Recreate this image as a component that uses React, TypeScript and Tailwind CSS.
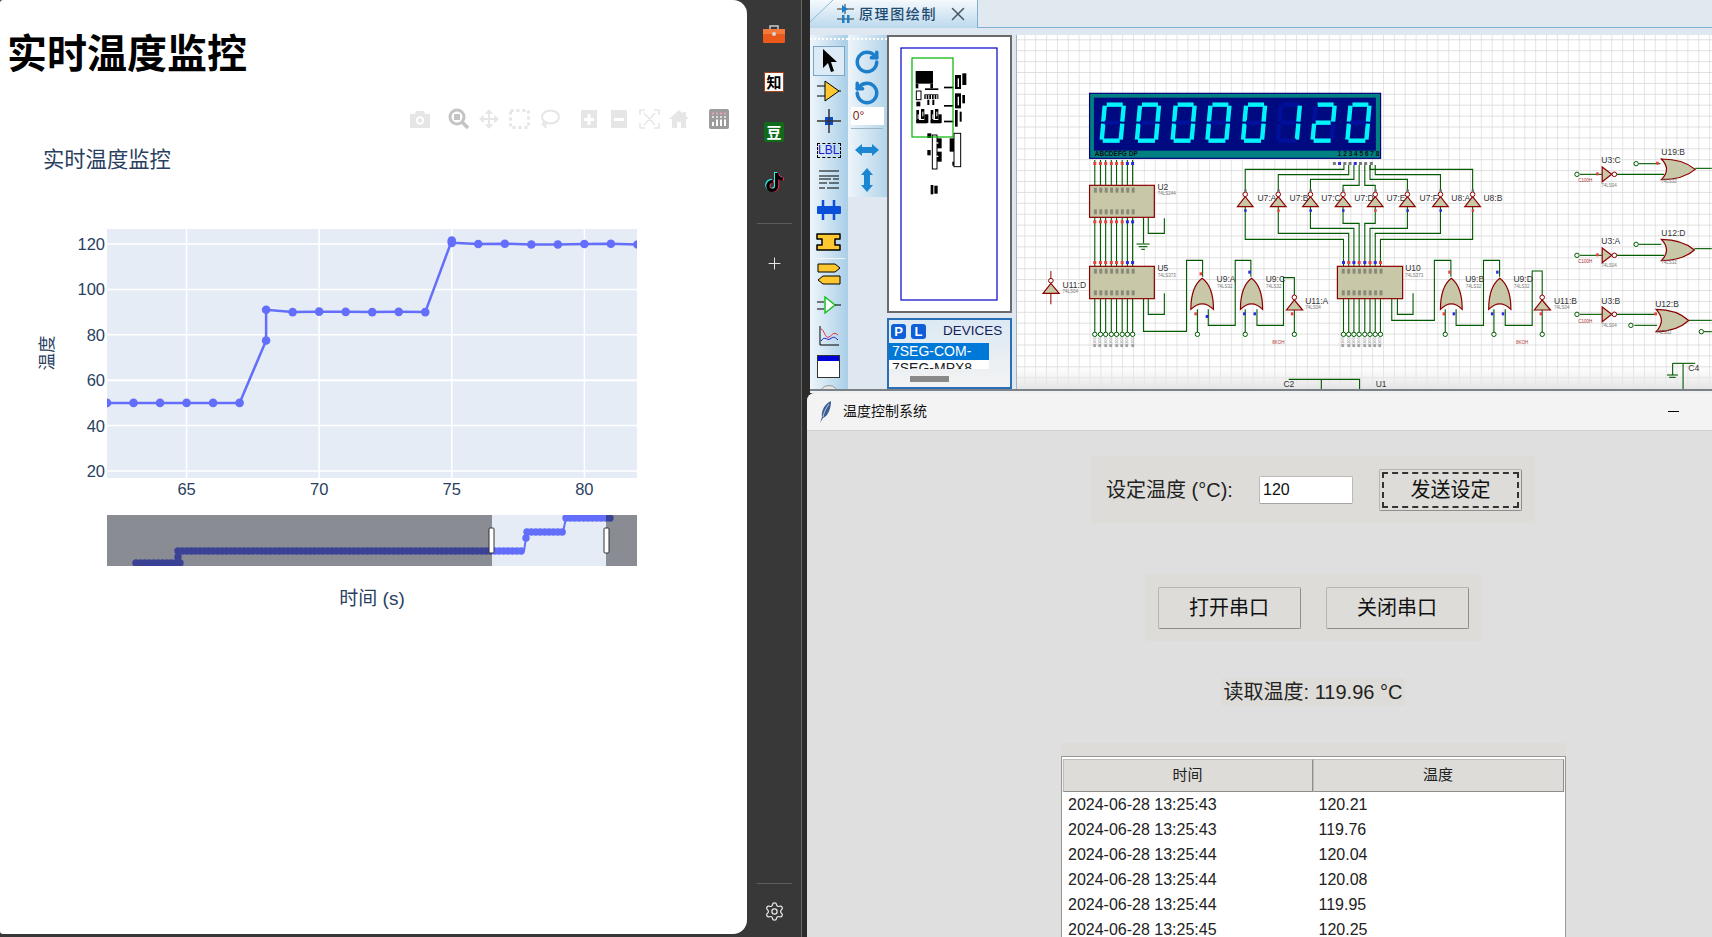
import React from 'react';
import { Move, Plus, RotateCcw, RotateCw, Settings, X as CloseIcon } from 'lucide-react';
import { FaTiktok } from 'react-icons/fa';

const cjk = { fontFamily: '"Liberation Sans","Noto Sans CJK SC",sans-serif' };

/* ---------- plotly chart ---------- */
const cx = (v: number) => 107 + (v - 62) * 26.52;
const cy = (v: number) => 244 + (120 - v) * 2.27;

const points: [number, number][] = [
  [62, 50], [63, 50], [64, 50], [65, 50], [66, 50], [67, 50], [68, 77.5], [68, 91], [69, 90], [70, 90.2], [71, 90.1],
  [72, 90], [73, 90.1], [74, 90], [75, 121.5], [75, 120.5], [76, 120], [77, 120.1], [78, 119.8], [79, 119.8], [80, 120], [81, 120.1], [82, 119.8],
];

// overview dots of the range slider, one per sample
const rangeDots: [number, number][] = [
  ...Array.from({ length: 11 }, (_, i): [number, number] => [136 + i * 4.4, 563]),
  [178, 557],
  ...Array.from({ length: 79 }, (_, i): [number, number] => [178 + i * 4.4, 551]),
  [526, 538],
  ...Array.from({ length: 9 }, (_, i): [number, number] => [527 + i * 4.4, 532]),
  ...Array.from({ length: 11 }, (_, i): [number, number] => [566 + i * 4.4, 518]),
];

const Chart = () => (
  <svg width={747} height={837} viewBox="0 100 747 837" className="block" style={cjk}>
    <defs>
      <clipPath id="plot"><rect x={107} y={229} width={530} height={249} /></clipPath>
      <clipPath id="range"><rect x={107} y={515} width={530} height={51} /></clipPath>
    </defs>
    <text x={43} y={167} fontSize={21.3} fill="#2a3f5f">实时温度监控</text>
    <rect x={107} y={229} width={530} height={249} fill="#e5ecf6" />
    {[65, 70, 75, 80].map(t => (
      <g key={t}>
        <line x1={cx(t)} x2={cx(t)} y1={229} y2={478} stroke="#fff" strokeWidth={1.5} />
        <text x={cx(t)} y={495} textAnchor="middle" fontSize={16.5} fill="#2a3f5f">{t}</text>
      </g>
    ))}
    {[20, 40, 60, 80, 100, 120].map(t => (
      <g key={t}>
        <line x1={107} x2={637} y1={cy(t)} y2={cy(t)} stroke="#fff" strokeWidth={t === 60 ? 2 : 1.5} />
        <text x={105} y={cy(t) + 6} textAnchor="end" fontSize={16.5} fill="#2a3f5f">{t}</text>
      </g>
    ))}
    <g clipPath="url(#plot)">
      <polyline points={points.map(p => `${cx(p[0])},${cy(p[1])}`).join(' ')} fill="none" stroke="#636efa" strokeWidth={2.5} />
      {points.map((p, i) => <circle key={i} cx={cx(p[0])} cy={cy(p[1])} r={4.3} fill="#636efa" />)}
    </g>
    <text transform="rotate(-90 47 353)" x={47} y={359} textAnchor="middle" fontSize={17.5} fill="#2a3f5f">温度</text>

    <rect x={107} y={515} width={530} height={51} fill="#e5ecf6" />
    <g clipPath="url(#range)">
      <polyline points="135,563 178,563 178,551 524,551 526,538 526,532 563,532 566,518 608,518" fill="none" stroke="#636efa" strokeWidth={2} />
      {rangeDots.map((p, i) => <circle key={i} cx={p[0]} cy={p[1]} r={3.7} fill="#636efa" />)}
    </g>
    <rect x={107} y={515} width={385} height={51} fill="#000" fillOpacity={0.4} />
    <rect x={606} y={515} width={31} height={51} fill="#000" fillOpacity={0.4} />
    <rect x={489} y={528} width={5} height={25} rx={1} fill="#fff" stroke="#333" />
    <rect x={604} y={528} width={5} height={25} rx={1} fill="#fff" stroke="#333" />
    <text x={372} y={605} textAnchor="middle" fontSize={19} fill="#2a3f5f">时间 (s)</text>
  </svg>
);

const Square = ({ kind }: { kind: 'plus' | 'minus' }) => (
  <svg width={18} height={20} viewBox="0 0 18 20">
    <rect x={1} y={1} width={16} height={18} fill="#e6e6e6" />
    <rect x={4} y={9} width={10} height={3} fill="#fff" />
    {kind === 'plus' && <rect x={7.5} y={5} width={3} height={11} fill="#fff" />}
  </svg>
);

const Modebar = () => (
  <div className="absolute left-[405px] top-[109px] flex h-5 items-center">
    <div className="flex w-[30px] justify-center">
      <svg width={20} height={17} viewBox="0 0 20 17">
        <path d="M0 3h5l1-3h8l1 3h5v14H0z" fill="#e6e6e6" />
        <circle cx={10} cy={9.5} r={4.2} fill="#fff" />
        <circle cx={10} cy={9.5} r={2.2} fill="#e6e6e6" />
      </svg>
    </div>
    <div className="ml-[9px] flex w-[30px] justify-center">
      <svg width={22} height={22} viewBox="0 0 22 22">
        <circle cx={9} cy={9} r={7} fill="#fff" stroke="#c4c4c4" strokeWidth={3} />
        <rect x={6} y={6} width={6} height={6} fill="#c4c4c4" />
        <line x1={14} y1={14} x2={20} y2={20} stroke="#c4c4c4" strokeWidth={3.5} />
      </svg>
    </div>
    <div className="flex w-[30px] justify-center"><Move size={20} color="#e6e6e6" strokeWidth={2.5} /></div>
    <div className="flex w-[30px] justify-center">
      <svg width={21} height={20}><rect x={1.5} y={1.5} width={18} height={17} fill="none" stroke="#e6e6e6" strokeWidth={3} strokeDasharray="3 3" /></svg>
    </div>
    <div className="flex w-[30px] justify-center">
      <svg width={21} height={20} fill="none" stroke="#e6e6e6" strokeWidth={2}>
        <ellipse cx={11.5} cy={8} rx={8.5} ry={6.5} />
        <path d="M5 13c-2 2-1 4 1 3s1-3-1-3zM6 16c0 1 0 2 1 3" />
      </svg>
    </div>
    <div className="ml-[10px] flex w-[30px] justify-center"><Square kind="plus" /></div>
    <div className="flex w-[30px] justify-center"><Square kind="minus" /></div>
    <div className="flex w-[30px] justify-center">
      <svg width={21} height={20} fill="none" stroke="#e6e6e6" strokeWidth={1.5}>
        <path d="M1 6V1h5M15 1h5v5M20 14v5h-5M6 19H1v-5M5 4l11 12M16 4L5 16" />
      </svg>
    </div>
    <div className="flex w-[30px] justify-center">
      <svg width={20} height={18} viewBox="0 0 20 18">
        <path d="M10 0L0 9h3v9h5v-6h4v6h5V9h3l-3-2.7V2h-3v1.6z" fill="#e6e6e6" />
      </svg>
    </div>
    <div className="ml-[10px] flex w-[30px] justify-center">
      <svg width={20} height={20}>
        <rect width={20} height={20} rx={2} fill="#9c9c9c" />
        {[4, 8, 12, 16].map(x => <g key={x}>
          <rect x={x - 1} y={3.5} width={2} height={2} fill="#e8a0b4" />
          <rect x={x - 1} y={7} width={2} height={2} fill="#ddd" />
          <rect x={x - 1} y={x === 4 ? 13 : 10.5} width={2} height={x === 4 ? 4 : 6.5} fill="#fff" />
        </g>)}
      </svg>
    </div>
  </div>
);

/* ---------- dark dock ---------- */
const Dock = () => (
  <div className="flex w-[55px] flex-col items-center border-r border-[#6a6a6a] bg-[#383838]" style={cjk}>
    <div className="mt-[24px] h-[19px]">
      <svg width={22} height={19} viewBox="0 0 22 19">
        <path d="M7 5V2h8v3" fill="none" stroke="#c9c9c9" strokeWidth={1.5} />
        <rect x={0} y={5} width={22} height={14} rx={1} fill="#e8591a" />
        <rect x={0} y={5} width={22} height={5} fill="#f47a3c" />
        <circle cx={11} cy={10} r={2} fill="#d8d8d8" />
      </svg>
    </div>
    <div className="mt-[29px] flex h-5 w-5 items-center justify-center border border-[#a0431f] bg-white text-[15px] font-bold leading-none text-black">知</div>
    <div className="mt-[30px] flex h-5 w-5 items-center justify-center rounded-[2px] bg-[#0f6b1a] text-[15px] font-bold leading-none text-white">豆</div>
    <div className="relative mt-[30px] h-5 w-5">
      <FaTiktok size={19} color="#25f4ee" className="absolute left-0 top-0" />
      <FaTiktok size={19} color="#fe2c55" className="absolute left-[2px] top-[1px]" />
      <FaTiktok size={19} color="#000" className="absolute left-[1px] top-[0.5px]" />
    </div>
    <div className="mt-[31px] h-px w-[35px] bg-[#5c5c5c]" />
    <Plus size={19} strokeWidth={1.2} color="#f0f0f0" className="mt-[30px]" />
    <div className="mt-auto h-px w-[35px] bg-[#5c5c5c]" />
    <Settings size={21} strokeWidth={1.4} color="#e8e8e8" className="mb-[15px] mt-[17px]" />
  </div>
);

/* ---------- proteus toolbars ---------- */
const Tool = ({ h, children, active }: { h: number; children: React.ReactNode; active?: boolean }) => (
  <div className={`flex w-[32px] shrink-0 items-center justify-center ${active ? 'border border-[#7aa7c7] bg-[#dcebf5]' : ''}`} style={{ height: h }}>
    {children}
  </div>
);

const ToolColumn = () => (
  <div className="flex h-[354px] w-[38px] flex-col items-center overflow-hidden bg-gradient-to-r from-[#eef5fa] to-[#a9cfe8] pt-[3px]">
    <div className="h-[8px] w-full shrink-0 border-t-2 border-dotted border-white" />
    <Tool h={30} active><svg width={16} height={26}><path d="M2 1v19l5-5 3 9 3-1-3-9h6z" fill="#000" /></svg></Tool>
    <Tool h={30}>
      <svg width={24} height={22}><path d="M8 1v20l14-10z" fill="#fdc82f" stroke="#000" /><path d="M0 6h8M0 16h8M22 11h2" stroke="#000" /></svg>
    </Tool>
    <Tool h={29}>
      <svg width={24} height={24}><rect x={8} y={8} width={8} height={8} fill="#0a4fd0" /><path d="M12 0v24M0 12h24" stroke="#333" strokeWidth={1.5} /></svg>
    </Tool>
    <Tool h={30}>
      <div className="flex h-[15px] w-6 items-center justify-center border border-dashed border-black font-['Liberation_Sans',sans-serif] text-[12px] leading-none text-[#1a1ad0]">LBL</div>
    </Tool>
    <Tool h={30}>
      <svg width={20} height={20} stroke="#000"><path d="M0 1h20M0 6h20M0 9h12M14 9h6M0 13h8M10 13h10M0 18h6M8 18h12" /></svg>
    </Tool>
    <Tool h={30}>
      <svg width={24} height={20}><rect x={0} y={6} width={24} height={8} rx={1} fill="#0a50d8" /><path d="M6 0v20M17 0v20" stroke="#0a50d8" strokeWidth={2.5} /></svg>
    </Tool>
    <Tool h={33}>
      <svg width={25} height={20}><path d="M1 2H24V7H19V13H24V18H1V13H6V7H1Z" fill="#fdc82f" stroke="#000" strokeWidth={1.5} strokeLinejoin="round" /></svg>
    </Tool>
    <div className="h-px w-[32px] shrink-0 bg-[#f4f4f4]" />
    <Tool h={30}>
      <svg width={24} height={22} stroke="#000"><path d="M1 1h17l5 4-5 4H1z" fill="#fdc82f" /><path d="M23 13H6l-5 4 5 4h17z" fill="#fdc82f" /></svg>
    </Tool>
    <Tool h={32}>
      <svg width={24} height={18}><path d="M8 1v16l10-8z" fill="#fff" stroke="#19c21f" strokeWidth={1.5} /><path d="M0 6h7M0 13h7M18 9h6" stroke="#000" /></svg>
    </Tool>
    <Tool h={30}>
      <svg width={22} height={22} fill="none"><path d="M2 1v19h19" stroke="#000" /><path d="M3 4c3 0 4 10 8 8s4-6 9-2" stroke="#e03030" /><path d="M3 16c4-6 6 0 9-2s4-3 8 1" stroke="#1a1ad0" /></svg>
    </Tool>
    <Tool h={31}>
      <svg width={23} height={23}><rect x={0.5} y={0.5} width={22} height={22} fill="#fff" stroke="#333" /><rect x={1} y={1} width={21} height={5} fill="#0000d8" /></svg>
    </Tool>
    <div className="mt-[3px] h-5 w-5 shrink-0 rounded-full border border-[#999] bg-[#e8e8e8]" />
  </div>
);

const DoubleArrow = ({ vertical }: { vertical?: boolean }) => (
  <svg width={24} height={24} viewBox="0 0 24 24" className={vertical ? 'rotate-90' : ''}>
    <path d="M0 12l7-6v3h10V6l7 6-7 6v-3H7v3z" fill="#1b86d1" />
  </svg>
);

const RotateColumn = () => (
  <div className="flex h-[162px] w-[40px] flex-col items-center bg-gradient-to-r from-[#eef5fa] to-[#b3d4ea] pt-[3px]">
    <div className="h-[8px] w-full shrink-0 border-t-2 border-dotted border-white" />
    <RotateCw size={26} strokeWidth={3.2} color="#1b7fcb" className="mt-[3px] shrink-0" />
    <RotateCcw size={26} strokeWidth={3.2} color="#1b7fcb" className="mt-[5px] shrink-0" />
    <div className="mt-[1px] h-[18px] w-[33px] shrink-0 bg-white pl-[2px] font-['Liberation_Sans',sans-serif] text-[12px] leading-[18px] text-[#7a1a1a]">0°</div>
    <div className="mt-[3px] h-px w-[32px] shrink-0 bg-[#9db4c4]" />
    <div className="mt-[9px]"><DoubleArrow /></div>
    <div className="mt-[6px]"><DoubleArrow vertical /></div>
  </div>
);

// read off a crop of the overview, in 3x crop pixels
const blobs = [
  [50, 48, 52, 38], [50, 86, 8, 14], [94, 86, 8, 14], [52, 140, 12, 14], [78, 100, 40, 5], [76, 118, 42, 14], [85, 134, 6, 16], [100, 134, 6, 16],
  [52, 165, 8, 38], [66, 162, 10, 30], [76, 178, 12, 26], [52, 195, 32, 10], [95, 165, 8, 38], [108, 162, 10, 30], [118, 178, 10, 26], [95, 195, 30, 10],
  [135, 95, 28, 5], [135, 150, 28, 5], [135, 197, 28, 5], [168, 60, 18, 42], [190, 55, 12, 35], [168, 115, 18, 45], [190, 120, 8, 25], [168, 165, 8, 50], [182, 170, 6, 30],
  [112, 250, 16, 30], [112, 290, 16, 30], [152, 250, 14, 40], [160, 320, 8, 12], [95, 390, 8, 28], [106, 392, 10, 24], [85, 235, 12, 14], [85, 285, 10, 16],
];
const outlines = [[52, 108, 14, 26], [100, 240, 14, 102], [165, 235, 20, 100]];
const slits = [[80, 120, 3, 12], [88, 120, 3, 12], [96, 120, 3, 12], [104, 120, 3, 12], [112, 120, 3, 12], [56, 178, 3, 14], [70, 170, 3, 14], [100, 178, 3, 14], [112, 170, 3, 14], [176, 70, 4, 26], [176, 125, 4, 26], [112, 262, 6, 4], [112, 302, 6, 4]];

const Overview = () => (
  <div className="h-[278px] w-[125px] border-2 border-[#6a6a6a] bg-white">
    <svg width={121} height={274} className="block">
      <rect x={12} y={11} width={96} height={252} fill="none" stroke="#0000c8" strokeWidth={1.2} />
      {blobs.map((b, i) => <rect key={i} x={10 + b[0] / 3} y={18 + b[1] / 3} width={b[2] / 3} height={b[3] / 3} fill="#000" />)}
      {outlines.map((b, i) => <rect key={i} x={10 + b[0] / 3} y={18 + b[1] / 3} width={b[2] / 3} height={b[3] / 3} fill="#fff" stroke="#000" />)}
      {slits.map((b, i) => <rect key={i} x={10 + b[0] / 3} y={18 + b[1] / 3} width={b[2] / 3} height={b[3] / 3} fill="#fff" />)}
      <rect x={23} y={21} width={41} height={79} fill="none" stroke="#00b400" strokeWidth={1.2} />
    </svg>
  </div>
);

const Devices = () => (
  <div className="mt-[5px] h-[71px] w-[125px] overflow-hidden border-2 border-[#2a6fb5] bg-gradient-to-b from-[#dce9f3] to-[#f3f3f3] font-['Liberation_Sans',sans-serif]">
    <div className="flex h-[23px] items-center gap-[5px] pl-[2px]">
      <div className="flex h-[15px] w-[15px] items-center justify-center rounded-[3px] bg-[#0e5fd8] text-[13px] font-bold text-white">P</div>
      <div className="flex h-[15px] w-[15px] items-center justify-center rounded-[3px] bg-[#0e5fd8] text-[13px] font-bold text-white">L</div>
      <span className="ml-[12px] text-[13.5px] text-[#15205a]">DEVICES</span>
    </div>
    <div className="h-[26px] w-[100px] overflow-hidden bg-white text-[14px] leading-[17px]">
      <div className="h-[17px] overflow-hidden whitespace-nowrap bg-[#0078d7] pl-[3px] text-white">7SEG-COM-</div>
      <div className="pl-[3px] text-[#222]">7SEG-MPX8</div>
    </div>
    <div className="ml-[21px] mt-[7px] h-[6px] w-[39px] bg-[#8a8a8a]" />
  </div>
);

/* ---------- schematic ---------- */
const X = (z: number) => 13 + z * 0.4348;
const Y = (z: number) => 25 + z / 3;
const pts = (s: string) => s.split(' ').map(p => {
  const [a, b] = p.split(',').map(Number);
  return `${X(a)},${Y(b)}`;
}).join(' ');

const busA = [149, 162, 174, 187, 199, 212, 224, 236];
const busB = [721, 733, 745, 757, 770, 782, 794, 806];
const invX = [495, 571, 645, 720, 794, 868, 944, 1018];

const wires = [
  ...busA.map(x => `${x},300 ${x},376`),
  ...busA.map(x => `${x},472 ${x},619`),
  ...busA.map(x => `${x},716 ${x},818`),
  ...busB.map(x => `${x},595 ${x},619`),
  ...busB.map(x => `${x},716 ${x},818`),
  '495,397 495,328 722,328 722,315', '571,397 571,344 733,344 733,315', '645,397 645,358 745,358 745,315', '720,397 720,376 757,376 757,315',
  '794,397 794,376 770,376 770,315', '868,397 868,358 782,358 782,315', '944,397 944,344 794,344 794,315', '1018,397 1018,328 782,328 782,315',
  '495,440 495,538 721,538 721,595', '571,440 571,520 733,520 733,595', '645,440 645,505 745,505 745,595', '720,440 720,490 757,490 757,595',
  '794,440 794,490 770,490 770,595', '868,440 868,505 782,505 782,595', '944,440 944,520 794,520 794,595', '1018,440 1018,538 806,538 806,595',
  '272,472 272,520 309,520 309,475', '261,472 261,550', '245,552 275,552', '250,560 270,560', '256,568 264,568',
  '272,716 272,763 309,763 309,700', '261,716 261,814 360,814 360,601 397,601 397,650', '410,748 410,796 472,796 472,601 508,601 508,650',
  '522,748 522,796 583,796 583,653 608,653 608,705', '385,748 385,818', '495,748 495,818', '608,750 608,818',
  '845,716 845,763 881,763 881,700', '832,716 832,781 930,781 930,601 968,601 968,650', '980,748 980,796 1043,796 1043,601 1080,601 1080,650',
  '1093,748 1093,796 1155,796 1155,633 1178,633 1178,705', '955,748 955,818', '1067,748 1067,818', '1178,750 1178,818',
  '1265,343 1316,343', '1400,311 1450,311', '1350,343 1458,343', '1530,325 1568,325',
  '1265,586 1316,586', '1400,553 1452,553', '1350,586 1458,586', '1528,566 1568,566',
  '1265,763 1316,763', '1350,763 1442,763', '1390,796 1442,796', '1515,781 1568,781', '1550,815 1568,815',
  '595,958 758,958 758,990', '670,958 670,990', '1478,910 1530,910', '1502,910 1502,990', '1478,910 1478,945', '1465,945 1490,945', '1470,952 1485,952',
];

const Inverter = ({ c }: { c: number }) => (
  <g>
    <polygon points={pts(`${c - 18},440 ${c + 18},440 ${c},410`)} fill="#c8c8a8" stroke="#8b0000" strokeWidth={1.2} />
    <circle cx={X(c)} cy={Y(403)} r={2.3} fill="#fff" stroke="#8b0000" />
  </g>
);

const OrUp = ({ l, r }: { l: number; r: number }) => {
  const m = (l + r) / 2;
  return (
    <path
      d={`M${X(l)} ${Y(748)} Q${X(l)} ${Y(680)} ${X(m)} ${Y(655)} Q${X(r)} ${Y(680)} ${X(r)} ${Y(748)} Q${X(m)} ${Y(715)} ${X(l)} ${Y(748)}Z`}
      fill="#c8c8a8" stroke="#8b0000" strokeWidth={1.2}
    />
  );
};

const OrRight = ({ l, r, t, b }: { l: number; r: number; t: number; b: number }) => {
  const m = (t + b) / 2;
  return (
    <path
      d={`M${X(l)} ${Y(t)} Q${X(r - 28)} ${Y(t)} ${X(r)} ${Y(m)} Q${X(r - 28)} ${Y(b)} ${X(l)} ${Y(b)} Q${X(l + 24)} ${Y(m)} ${X(l)} ${Y(t)}Z`}
      fill="#c8c8a8" stroke="#8b0000" strokeWidth={1.2}
    />
  );
};

const NotRight = ({ y }: { y: number }) => (
  <g>
    <polygon points={pts(`1316,${y - 22} 1316,${y + 22} 1338,${y}`)} fill="#c8c8a8" stroke="#8b0000" strokeWidth={1.2} />
    <circle cx={X(1344)} cy={Y(y)} r={2.3} fill="#fff" stroke="#8b0000" />
  </g>
);

const labels: [string, number, number][] = [
  ['U2', 293, 390], ['U5', 293, 634], ['U10', 863, 634], ['U11:D', 75, 685], ['U9:A', 429, 667], ['U9:C', 542, 667], ['U9:B', 1001, 667], ['U9:D', 1112, 667],
  ['U11:A', 633, 733], ['U11:B', 1205, 733], ['U7:A', 523, 424], ['U7:B', 597, 424], ['U7:C', 670, 424], ['U7:D', 746, 424], ['U7:E', 820, 424], ['U7:F', 896, 424],
  ['U8:A', 969, 424], ['U8:B', 1043, 424], ['U3:C', 1314, 310], ['U19:B', 1452, 286], ['U3:A', 1314, 553], ['U12:D', 1452, 529], ['U3:B', 1314, 733], ['U12:B', 1438, 742],
  ['C2', 583, 982], ['U1', 795, 982], ['C4', 1514, 934],
];

const tiny: [string, number, number][] = [
  ['74LS04', 75, 700], ['74LS244', 294, 406], ['74LS373', 294, 650], ['74LS373', 863, 650], ['74LS32', 430, 683], ['74LS32', 543, 683], ['74LS32', 1002, 683], ['74LS32', 1113, 683],
  ['74LS04', 633, 748], ['74LS04', 1205, 748], ['74LS04', 1314, 380], ['74LS04', 1314, 622], ['74LS04', 1314, 800], ['74LS32', 1452, 370], ['74LS32', 1452, 613], ['74LS32', 1440, 823],
];

const Digit = ({ z, on }: { z: number; on: string }) => {
  const x = X(z);
  const y = 25 + 134 / 3;
  const w = 19;
  const h = 36;
  const s = 3;
  const segs: Record<string, string> = {
    a: `${x + s + 2},${y} ${x + w + s - 1},${y}`,
    b: `${x + w + s},${y + 1} ${x + w + 1.5},${y + h / 2 - 1}`,
    c: `${x + w + 1.5},${y + h / 2 + 1} ${x + w},${y + h - 1}`,
    d: `${x + 1},${y + h} ${x + w - 1},${y + h}`,
    e: `${x + 1.5},${y + h / 2 + 1} ${x},${y + h - 1}`,
    f: `${x + s},${y + 1} ${x + 1.5},${y + h / 2 - 1}`,
    g: `${x + 3},${y + h / 2} ${x + w - 1},${y + h / 2}`,
  };
  return (
    <g strokeWidth={4.4} fill="none">
      {Object.keys(segs).map(k => (
        <polyline key={k} points={segs[k]} stroke={on.includes(k) ? '#00f4fa' : '#00109a'} />
      ))}
    </g>
  );
};

const digits: [number, string][] = [
  [165, 'abcdef'], [246, 'abcdef'], [328, 'abcdef'], [408, 'abcdef'], [490, 'abcdef'], [570, 'bc'], [650, 'abged'], [730, 'abcdef'],
];

const Schematic = () => (
  <svg width={695} height={354} className="block" style={{ fontFamily: '"Liberation Sans",sans-serif' }}>
    <defs>
      <pattern id="grid" x={7.3} y={4.3} width={10.87} height={10.9} patternUnits="userSpaceOnUse">
        <path d="M10.87 0H0V10.9" fill="none" stroke="#d6d6d6" strokeWidth={1.3} />
      </pattern>
      <linearGradient id="fade" x1="0" y1="0" x2="0" y2="1">
        <stop offset="0" stopColor="#eee" stopOpacity={0} />
        <stop offset="1" stopColor="#e4e4e4" />
      </linearGradient>
    </defs>
    <rect width={695} height={354} fill="#fff" />
    <rect width={695} height={354} fill="url(#grid)" />
    <rect y={330} width={695} height={24} fill="url(#fade)" />

    <rect x={X(137)} y={Y(100)} width={291} height={65} fill="#008080" stroke="#000080" strokeWidth={1.2} />
    <rect x={X(147)} y={Y(113)} width={282} height={53} fill="#000a80" />
    {digits.map(d => <Digit key={d[0]} z={d[0]} on={d[1]} />)}
    <text x={X(149)} y={Y(288)} fontSize={6.5} fontWeight={700} fill="#111">ABCDEFG DP</text>
    <text x={X(708)} y={Y(288)} fontSize={6.5} fontWeight={700} fill="#111">1 2 3 4 5 6 7 8</text>

    {wires.map((w, i) => <polyline key={i} points={pts(w)} fill="none" stroke="#005a00" strokeWidth={1.1} />)}

    {[[137, 376, 149, 96], [137, 619, 149, 97], [707, 619, 150, 97]].map(c => (
      <g key={c[0] + c[1]}>
        <rect x={X(c[0])} y={Y(c[1])} width={c[2] * 0.4348} height={c[3] / 3} fill="#c8c8a8" stroke="#8b0000" strokeWidth={1.2} />
        {Array.from({ length: 8 }, (_, i) => (
          <g key={i} fill="#8a8a78">
            <rect x={X(c[0] + 10 + i * 12.4)} y={Y(c[1] + 7)} width={3} height={5} />
            <rect x={X(c[0] + 10 + i * 12.4)} y={Y(c[1] + 72)} width={3} height={5} />
          </g>
        ))}
      </g>
    ))}

    {invX.map(c => <Inverter key={c} c={c} />)}
    <polygon points={pts('30,700 67,700 48,670')} fill="#c8c8a8" stroke="#8b0000" strokeWidth={1.2} />
    <polyline points={pts('48,633 48,660')} stroke="#8b0000" />
    <polyline points={pts('48,700 48,733')} stroke="#8b0000" />
    <circle cx={X(48)} cy={Y(662)} r={2.3} fill="#fff" stroke="#8b0000" />
    <polygon points={pts('590,750 627,750 608,720')} fill="#c8c8a8" stroke="#8b0000" strokeWidth={1.2} />
    <circle cx={X(608)} cy={Y(712)} r={2.3} fill="#fff" stroke="#8b0000" />
    <polygon points={pts('1160,750 1197,750 1178,720')} fill="#c8c8a8" stroke="#8b0000" strokeWidth={1.2} />
    <circle cx={X(1178)} cy={Y(712)} r={2.3} fill="#fff" stroke="#8b0000" />

    <OrUp l={370} r={422} />
    <OrUp l={484} r={535} />
    <OrUp l={944} r={994} />
    <OrUp l={1055} r={1106} />
    <OrRight l={1452} r={1530} t={297} b={359} />
    <OrRight l={1452} r={1528} t={538} b={602} />
    <OrRight l={1440} r={1515} t={748} b={815} />
    <NotRight y={343} />
    <NotRight y={586} />
    <NotRight y={763} />

    {[...busA, ...busB, 385, 495, 608, 955, 1067, 1178].map(x => (
      <circle key={x} cx={X(x)} cy={Y(823)} r={2.2} fill="#fff" stroke="#005a00" />
    ))}
    {[[1258, 343], [1394, 311], [1258, 586], [1394, 553], [1258, 763], [1382, 796], [1544, 815]].map(p => (
      <circle key={p[0] + p[1]} cx={X(p[0])} cy={Y(p[1])} r={2.2} fill="#fff" stroke="#005a00" />
    ))}

    {busA.map((x, i) => (
      <g key={x}>
        <rect x={X(x) - 1.5} y={Y(306)} width={3} height={3} fill={i > 5 ? '#2a2ae0' : '#e8403a'} />
        <rect x={X(x) - 1.5} y={Y(481)} width={3} height={3} fill={i > 5 ? '#2a2ae0' : '#e8403a'} />
        <rect x={X(x) - 1.5} y={Y(603)} width={3} height={3} fill={i > 5 ? '#2a2ae0' : '#e8403a'} />
      </g>
    ))}
    {[700, 712, 724, 736, 748, 760, 772, 785].map((x, i) => (
      <rect key={x} x={X(x) - 1.5} y={Y(306)} width={3} height={3} fill={i === 1 || i === 4 ? '#2a2ae0' : '#777'} />
    ))}
    {busB.map((x, i) => (
      <rect key={x} x={X(x) - 1.5} y={Y(603)} width={3} height={3} fill={i % 2 ? '#e8403a' : '#2a2ae0'} />
    ))}
    {invX.map((c, i) => (
      <g key={c}>
        <rect x={X(c) - 1} y={Y(448)} width={2.5} height={2.5} fill={i % 3 === 1 ? '#e8403a' : '#2a2ae0'} />
        <rect x={X(c) - 1} y={Y(388)} width={2.5} height={2.5} fill="#777" />
      </g>
    ))}
    {[[378, 757, 1], [404, 765, 0], [490, 757, 0], [514, 757, 0], [390, 637, 1], [502, 632, 0], [949, 757, 1], [972, 757, 0], [1060, 757, 0], [1085, 757, 0], [962, 632, 1], [1072, 632, 0], [600, 757, 1], [1172, 757, 1], [1302, 337, 1], [1440, 305, 1], [1302, 580, 1], [1436, 757, 1]].map(p => (
      <rect key={p[0] + p[1]} x={X(p[0])} y={Y(p[1])} width={2.5} height={3} fill={p[2] ? '#e8403a' : '#2a2ae0'} />
    ))}

    {labels.map(l => <text key={l[0]} x={X(l[1])} y={Y(l[2])} fontSize={8.5} fill="#333">{l[0]}</text>)}
    {tiny.map((t, i) => <text key={i} x={X(t[1])} y={Y(t[2])} fontSize={4.5} fill="#777">{t[0]}</text>)}
    {[[557, 853], [1118, 853]].map(p => <text key={p[0]} x={X(p[0])} y={Y(p[1])} fontSize={4.5} fill="#a33">8KOH</text>)}
    {[[1268, 367], [1268, 609], [1268, 789]].map(p => <text key={p[1]} x={X(p[0]) - 3} y={Y(p[1])} fontSize={4.5} fill="#a33">C100H</text>)}
    {[...busA, ...busB].map(x => (
      <text key={x} transform={`rotate(-90 ${X(x) + 1} ${Y(862)})`} x={X(x) + 1} y={Y(862)} fontSize={4} fill="#777">AD00</text>
    ))}
  </svg>
);

const Proteus = () => (
  <div className="ml-[3px] h-[393px] overflow-hidden bg-[#dfe8f0]">
    <div className="flex h-[28px] border-b border-[#7fb0cf] bg-[#e1e9f0]">
      <div className="flex h-[28px] w-[168px] items-center border-r border-[#7fb0cf] bg-gradient-to-b from-[#f4f9fc] to-[#bcd9ec]">
        <svg width={24} height={28} className="shrink-0"><line x1={0} y1={22} x2={23} y2={0} stroke="#8fb8d3" /></svg>
        <svg width={17} height={20} className="ml-[3px] shrink-0">
          <path d="M0 5h17M8 0v10M0 15h17" stroke="#333" />
          <path d="M5 1l6 4-6 4z" fill="#1b7fcb" />
          <rect x={5} y={11} width={2.5} height={8} fill="#1b7fcb" />
          <rect x={10} y={11} width={2.5} height={8} fill="#1b7fcb" />
        </svg>
        <span className="ml-[5px] whitespace-nowrap text-[14px] font-medium tracking-[1.6px] text-[#1e4a70]">原理图绘制</span>
        <CloseIcon size={22} strokeWidth={1.7} color="#4b5a66" className="ml-[10px] shrink-0" />
      </div>
    </div>
    <div className="flex pt-[7px]">
      <ToolColumn />
      <RotateColumn />
      <div className="w-[125px]">
        <Overview />
        <Devices />
      </div>
      <div className="ml-[4px] border-l border-[#aab4bb]"><Schematic /></div>
    </div>
    <div className="h-[4px] border-t-2 border-[#7b8186] bg-[#eef1f3]" />
  </div>
);

/* ---------- tk window ---------- */
const TkButton = ({ label, focus }: { label: string; focus?: boolean }) => (
  <button className="flex h-[42px] w-[143px] items-center justify-center rounded-[2px] border border-[#b6b5b0] border-b-[#8f8e8a] border-r-[#8f8e8a] bg-[#dddcd8] p-[2px] text-[20px] text-[#111]">
    <span className={`flex h-full w-full items-center justify-center ${focus ? 'border-2 border-dashed border-[#333]' : ''}`}>{label}</span>
  </button>
);

const rows = [
  ['2024-06-28 13:25:43', '120.21'],
  ['2024-06-28 13:25:43', '119.76'],
  ['2024-06-28 13:25:44', '120.04'],
  ['2024-06-28 13:25:44', '120.08'],
  ['2024-06-28 13:25:44', '119.95'],
  ['2024-06-28 13:25:45', '120.25'],
];

const TkWindow = () => (
  <div className="flex-1 overflow-hidden rounded-tl-[8px] bg-[#dfdfdf]">
    <div className="flex h-[38px] items-center border-b border-[#d0d0d0] bg-[#f3f3f3]">
      <svg width={14} height={22} viewBox="0 0 14 22" className="ml-[12px] shrink-0">
        <path d="M12 0C6 3 2 9 3 16l-2 6 3-5c5-2 8-9 8-17z" fill="#3a5f94" />
        <path d="M10 3C7 7 5 11 4 16" stroke="#b8cbe0" fill="none" />
      </svg>
      <span className="ml-[10px] w-[90px] shrink-0 whitespace-nowrap text-[14px] text-[#111]">温度控制系统</span>
      <div className="ml-[735px] h-px w-[11px] shrink-0 bg-black" />
    </div>
    <div className="flex w-[1012px] flex-col items-center">
      <div className="mt-[25px] flex h-[67px] w-[444px] items-center bg-[#dddcd8] pl-[15px]">
        <span className="w-[153px] text-[20px] text-[#222]">设定温度 (°C):</span>
        <input
          readOnly
          value="120"
          className="h-[28px] w-[94px] rounded-[2px] border border-[#bcbbb6] border-b-[#a5a4a0] bg-white pl-[3px] text-[16px] text-[#111] outline-none"
        />
        <div className="ml-[26px]"><TkButton label="发送设定" focus /></div>
      </div>
      <div className="mt-[51px] flex h-[67px] w-[337px] items-center justify-center gap-[25px] bg-[#dddcd8]">
        <TkButton label="打开串口" />
        <TkButton label="关闭串口" />
      </div>
      <div className="mt-[37px] flex h-[28px] w-[184px] items-center justify-center whitespace-nowrap bg-[#dddcd8] text-[20px] text-[#222]">
        读取温度: 119.96 °C
      </div>
      <div className="mt-[37px] w-[505px] bg-[#dddcd8] pt-[13px]">
        <div className="border border-[#999894] bg-white pt-[2px]">
          <div className="flex bg-[#f0f0f0] px-[1px]">
            <div className="flex h-[33px] w-[250px] items-center justify-center border border-[#bdbcb8] border-b-[#8f8e8a] border-r-[#8f8e8a] bg-[#dddcd8] text-[15px] text-[#222]">时间</div>
            <div className="flex h-[33px] flex-1 items-center justify-center border border-[#bdbcb8] border-b-[#8f8e8a] border-r-[#8f8e8a] bg-[#dddcd8] text-[15px] text-[#222]">温度</div>
          </div>
          {rows.map((r, i) => (
            <div key={i} className="flex h-[25px] items-center text-[16px] text-[#222]">
              <span className="w-[257px] pl-[6.5px]">{r[0]}</span>
              <span>{r[1]}</span>
            </div>
          ))}
        </div>
      </div>
    </div>
  </div>
);

export default function App() {
  return (
    <div className="flex h-[937px] w-[1712px] overflow-hidden bg-[#383838]" style={cjk}>
      <div className="flex h-[937px]">
        <div className="relative h-[934px] w-[747px] overflow-hidden rounded-r-[14px] rounded-l-[3px] bg-white">
          <h1 className="h-[100px] pl-[7px] pt-[27px] text-[40px] font-bold leading-[54px] text-black">实时温度监控</h1>
          <Modebar />
          <Chart />
        </div>
        <Dock />
      </div>
      <div className="w-[5px] bg-[#2b2b2b]" />
      <div className="flex w-[905px] flex-col bg-[#2b2b2b]">
        <Proteus />
        <TkWindow />
      </div>
    </div>
  );
}
